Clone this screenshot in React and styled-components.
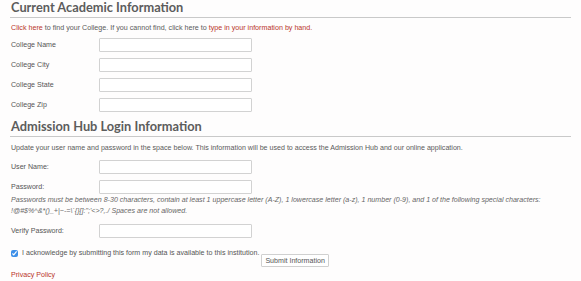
import React from 'react';
import styled, { createGlobalStyle } from 'styled-components';

const GlobalStyle = createGlobalStyle`
  html, body {
    margin: 0;
    padding: 0;
    background: #fefdfd;
  }
  body {
    font-family: "Liberation Sans", Arial, sans-serif;
    color: #555;
  }
`;

const Page = styled.div`
  width: 561px;
  padding: 0 10px 0 10px;
  font-size: 7.1px;
`;

const SectionTitle = styled.h2`
  margin: ${props => (props.second ? '7px 0 0' : '0')};
  padding: 0 0 2px 1px;
  font-family: Lato, "Open Sans", sans-serif;
  font-weight: 700;
  font-size: 12.8px;
  line-height: 15px;
  color: #5c5c5c;
  border-bottom: 1.5px solid #c9c9c9;
`;

const Intro = styled.p`
  margin: ${props => props.margin || '6px 0 5px 1px'};
  font-size: ${props => props.size || '7.1px'};
  line-height: 9px;
  color: #5a5a5a;
`;

const Red = styled.span`
  color: #b9352b;
`;

const Rows = styled.div`
  display: flex;
  flex-direction: column;
  gap: 6px;
  padding-left: 1px;
`;

const Row = styled.div`
  display: flex;
  align-items: center;
`;

const Label = styled.label`
  width: 88px;
  flex-shrink: 0;
  color: #555;
`;

const Input = styled.input`
  box-sizing: border-box;
  width: 153px;
  height: 14px;
  margin: 0;
  border: 1px solid #d2d2d2;
  border-radius: 1px;
  background: #fff;
`;

const Note = styled.p`
  margin: 1px 0 0;
  padding-left: 1px;
  font-style: italic;
  line-height: 11px;
  color: #666;
`;

const AgreeRow = styled.div`
  display: flex;
  align-items: flex-start;
  padding-left: 1px;
  margin-top: 11px;
`;

const Check = styled.input`
  width: 7px;
  height: 7px;
  margin: 1px 4px 0 0;
  accent-color: #3d8fe8;
`;

const AgreeText = styled.span`
  line-height: 9px;
  color: #555;
`;

const Button = styled.button`
  margin: 5px 0 0 2px;
  padding: 0 3px;
  height: 13px;
  font-family: "Liberation Sans", Arial, sans-serif;
  font-size: 7.1px;
  color: #555;
  background: #fff;
  border: 1px solid #d0d0d0;
  border-radius: 1px;
`;

const Privacy = styled.a`
  display: block;
  margin: 4px 0 0 1px;
  color: #b9352b;
  text-decoration: none;
  line-height: 9px;
`;

export default function App() {
  return (
    <>
      <GlobalStyle />
      <Page>
        <SectionTitle>Current Academic Information</SectionTitle>
        <Intro size="7.15px">
          <Red>Click here</Red> to find your College. If you cannot find, click here to{' '}
          <Red>type in your information by hand.</Red>
        </Intro>
        <Rows>
          <Row><Label>College Name</Label><Input /></Row>
          <Row><Label>College City</Label><Input /></Row>
          <Row><Label>College State</Label><Input /></Row>
          <Row><Label>College Zip</Label><Input /></Row>
        </Rows>

        <SectionTitle second>Admission Hub Login Information</SectionTitle>
        <Intro margin="7px 0 7px 1px">
          Update your user name and password in the space below. This information will be used to access the Admission Hub and our online application.
        </Intro>
        <Rows>
          <Row><Label>User Name:</Label><Input /></Row>
          <Row><Label>Password:</Label><Input type="password" /></Row>
        </Rows>
        <Note>
          Passwords must be between 8-30 characters, contain at least 1 uppercase letter (A-Z), 1 lowercase letter (a-z), 1 number (0-9), and 1 of the following special characters:
          <br />
          !@#$%^&amp;*()_+|~-=\`{'{}'}[]:";'&lt;&gt;?,./ Spaces are not allowed.
        </Note>
        <Rows style={{ marginTop: 7 }}>
          <Row><Label>Verify Password:</Label><Input type="password" /></Row>
        </Rows>
        <AgreeRow>
          <Check type="checkbox" defaultChecked />
          <AgreeText>I acknowledge by submitting this form my data is available to this institution.</AgreeText>
          <Button>Submit Information</Button>
        </AgreeRow>
        <Privacy href="#">Privacy Policy</Privacy>
      </Page>
    </>
  );
}
